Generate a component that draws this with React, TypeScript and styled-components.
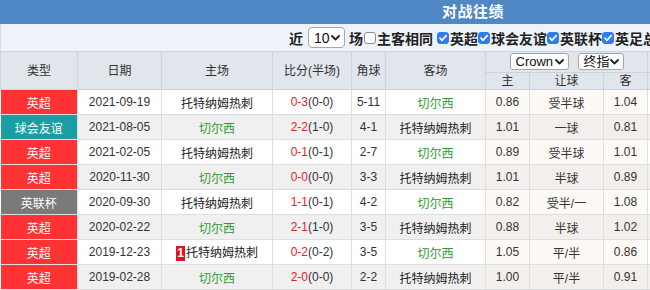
import styled, { createGlobalStyle } from 'styled-components';

interface Match {
    type: '英超' | '球会友谊' | '英联杯';
    date: string;
    home: string;
    score: string;
    half: string;
    corner: string;
    away: string;
    oddsHome: string;
    handicap: string;
    oddsAway: string;
    redCard?: number;
}

const CHELSEA = '切尔西';

const matches: Match[] = [
    { type: '英超', date: '2021-09-19', home: '托特纳姆热刺', score: '0-3', half: '(0-0)', corner: '5-11', away: '切尔西', oddsHome: '0.86', handicap: '受半球', oddsAway: '1.04' },
    { type: '球会友谊', date: '2021-08-05', home: '切尔西', score: '2-2', half: '(1-0)', corner: '4-1', away: '托特纳姆热刺', oddsHome: '1.01', handicap: '一球', oddsAway: '0.81' },
    { type: '英超', date: '2021-02-05', home: '托特纳姆热刺', score: '0-1', half: '(0-1)', corner: '2-7', away: '切尔西', oddsHome: '0.89', handicap: '受半球', oddsAway: '1.01' },
    { type: '英超', date: '2020-11-30', home: '切尔西', score: '0-0', half: '(0-0)', corner: '3-3', away: '托特纳姆热刺', oddsHome: '1.01', handicap: '半球', oddsAway: '0.89' },
    { type: '英联杯', date: '2020-09-30', home: '托特纳姆热刺', score: '1-1', half: '(0-1)', corner: '4-2', away: '切尔西', oddsHome: '0.82', handicap: '受半/一', oddsAway: '1.08' },
    { type: '英超', date: '2020-02-22', home: '切尔西', score: '2-1', half: '(1-0)', corner: '3-5', away: '托特纳姆热刺', oddsHome: '0.88', handicap: '半球', oddsAway: '1.02' },
    { type: '英超', date: '2019-12-23', home: '托特纳姆热刺', score: '0-2', half: '(0-2)', corner: '3-5', away: '切尔西', oddsHome: '1.05', handicap: '平/半', oddsAway: '0.86', redCard: 1 },
    { type: '英超', date: '2019-02-28', home: '切尔西', score: '2-0', half: '(0-0)', corner: '2-2', away: '托特纳姆热刺', oddsHome: '1.00', handicap: '平/半', oddsAway: '0.91' },
    { type: '英超', date: '2018-11-24', home: '托特纳姆热刺', score: '3-1', half: '(2-0)', corner: '4-4', away: '切尔西', oddsHome: '0.95', handicap: '平/半', oddsAway: '0.95' },
];

const typeColors: Record<Match['type'], string> = {
    '英超': '#ff3333',
    '球会友谊': '#1a9ea3',
    '英联杯': '#7a7a7a',
};

const leagues = ['英超', '球会友谊', '英联杯', '英足总杯'];

const Chevron = () => (
    <svg width="9" height="6" viewBox="0 0 9 6">
        <path d="M1 1l3.5 3.5L8 1" fill="none" stroke="#222" strokeWidth="1.8" strokeLinecap="round" strokeLinejoin="round" />
    </svg>
);

const Check = () => (
    <svg width="10" height="10" viewBox="0 0 10 10">
        <path d="M2 5.2l2 2.1L8.2 2.6" fill="none" stroke="#fff" strokeWidth="1.7" strokeLinecap="round" strokeLinejoin="round" />
    </svg>
);

export default function App() {
    return (
        <Page>
            <GlobalStyle />
            <Board>
                <Title>对战往绩</Title>
                <FilterBar>
                    <Word $after={5}>近</Word>
                    <FakeSelect $w={37} $h={21}>10<Chevron /></FakeSelect>
                    <Word $before={4} $after={1}>场</Word>
                    <Label $after={4}>
                        <CheckBox $checked={false} />主客相同
                    </Label>
                    {leagues.map(l => (
                        <Label key={l}>
                            <CheckBox $checked><Check /></CheckBox>{l}
                        </Label>
                    ))}
                </FilterBar>
                <Table>
                    <colgroup>
                        {[77, 84, 111, 79, 34, 100, 44, 74, 44, 44, 74, 44, 45, 46, 46].map((w, i) => (
                            <col key={i} style={{ width: w }} />
                        ))}
                    </colgroup>
                    <thead>
                        <tr>
                            <Th rowSpan={2}>类型</Th>
                            <Th rowSpan={2}>日期</Th>
                            <Th rowSpan={2}>主场</Th>
                            <Th rowSpan={2}>比分(半场)</Th>
                            <Th rowSpan={2}>角球</Th>
                            <Th rowSpan={2}>客场</Th>
                            <Th colSpan={3} $short>
                                <SelectGroup>
                                    <FakeSelect $w={59} $h={17} $thin>Crown<Chevron /></FakeSelect>
                                    <FakeSelect $w={46} $h={17} $thin>终指<Chevron /></FakeSelect>
                                </SelectGroup>
                            </Th>
                            <Th colSpan={3} $short>大小球</Th>
                            <Th colSpan={3} $short>结果</Th>
                        </tr>
                        <tr>
                            {['主', '让球', '客', '大', '盘口', '小', '胜负', '盘路', '大小'].map(h => (
                                <Th key={h} $sub>{h}</Th>
                            ))}
                        </tr>
                    </thead>
                    <tbody>
                        {matches.map((m, i) => {
                            const alt = i % 2 === 1;
                            return (
                                <tr key={m.date}>
                                    <TypeCell $color={typeColors[m.type]}>{m.type}</TypeCell>
                                    <Td $alt={alt}>{m.date}</Td>
                                    <Td $alt={alt}>
                                        {m.redCard ? <RedCard>{m.redCard}</RedCard> : null}
                                        <Team $chelsea={m.home === CHELSEA}>{m.home}</Team>
                                    </Td>
                                    <Td $alt={alt}>
                                        <Score>{m.score}</Score>{m.half}
                                    </Td>
                                    <Td $alt={alt}>{m.corner}</Td>
                                    <Td $alt={alt}>
                                        <Team $chelsea={m.away === CHELSEA}>{m.away}</Team>
                                    </Td>
                                    <Td $alt={alt} $odds>{m.oddsHome}</Td>
                                    <Td $alt={alt} $odds>{m.handicap}</Td>
                                    <Td $alt={alt} $odds>{m.oddsAway}</Td>
                                    <Td $alt={alt}>0.90</Td>
                                    <Td $alt={alt}>2.5</Td>
                                    <Td $alt={alt}>0.96</Td>
                                    <Td $alt={alt}>负</Td>
                                    <Td $alt={alt}>输</Td>
                                    <Td $alt={alt}>大</Td>
                                </tr>
                            );
                        })}
                    </tbody>
                </Table>
            </Board>
        </Page>
    );
}

const GlobalStyle = createGlobalStyle`
    html, body {
        margin: 0;
        padding: 0;
        background: #fff;
        overflow: hidden;
    }
    body {
        font-family: "Liberation Sans", "Noto Sans CJK SC", sans-serif;
        font-size: 12px;
        color: #333;
    }
`;

const Page = styled.div`
    width: 650px;
    height: 290px;
    overflow: hidden;
`;

const Board = styled.div`
    width: 946px;
`;

const Title = styled.div`
    height: 24px;
    line-height: 24px;
    background: #4f88c5;
    color: #fff;
    font-size: 15px;
    font-weight: bold;
    text-align: center;
    letter-spacing: 0.5px;
`;

const FilterBar = styled.div`
    height: 27px;
    box-sizing: border-box;
    display: flex;
    align-items: center;
    padding-left: 288px;
    background: #eef3f9;
    border-left: 1px solid #d3dbe5;
    font-size: 14px;
    font-weight: bold;
    color: #222;
    white-space: nowrap;
`;

const Word = styled.span<{ $before?: number; $after?: number }>`
    margin-left: ${p => p.$before ?? 0}px;
    margin-right: ${p => p.$after ?? 0}px;
`;

const Label = styled.label<{ $after?: number }>`
    display: inline-flex;
    align-items: center;
    gap: 1px;
    margin-right: ${p => p.$after ?? 0}px;
`;

const CheckBox = styled.span<{ $checked: boolean }>`
    display: inline-flex;
    align-items: center;
    justify-content: center;
    width: 12px;
    height: 12px;
    box-sizing: border-box;
    border-radius: 3px;
    background: ${p => (p.$checked ? '#2f7cf0' : '#fff')};
    border: 1px solid ${p => (p.$checked ? '#2f7cf0' : '#8e8e8e')};
`;

const FakeSelect = styled.span<{ $w: number; $h: number; $thin?: boolean }>`
    display: inline-flex;
    align-items: center;
    justify-content: space-between;
    box-sizing: border-box;
    width: ${p => p.$w}px;
    height: ${p => p.$h}px;
    padding: 0 4px 0 5px;
    background: #fff;
    border: 1px solid #a6a6a6;
    border-radius: ${p => (p.$thin ? '3px' : '4px')};
    font-size: ${p => (p.$thin ? '13px' : '14px')};
    font-weight: normal;
    color: #111;
`;

const Table = styled.table`
    width: 946px;
    table-layout: fixed;
    border-collapse: collapse;
`;

const Th = styled.th<{ $short?: boolean; $sub?: boolean }>`
    height: ${p => (p.$sub ? '16px' : p.$short ? '20px' : 'auto')};
    padding: 0;
    background: #e1e6ed;
    border: 1px solid #cbd3dc;
    font-weight: normal;
    font-size: 12px;
    color: #333;
    text-align: center;
    line-height: 14px;
`;

const SelectGroup = styled.div`
    display: flex;
    justify-content: center;
    gap: 9px;
    margin-top: -1px;
`;

const Td = styled.td<{ $alt: boolean; $odds?: boolean }>`
    height: 24px;
    padding: 0;
    text-align: center;
    white-space: nowrap;
    border: 1px solid #dedede;
    color: #333;
    background: ${p =>
        p.$odds ? (p.$alt ? '#f2efec' : '#fdf9f6') : p.$alt ? '#f0f0f0' : '#ffffff'};
`;

const TypeCell = styled.td<{ $color: string }>`
    height: 24px;
    padding: 0;
    text-align: center;
    color: #fff;
    background: ${p => p.$color};
    border: 1px solid #dedede;
    border-left: none;
`;

const Team = styled.span<{ $chelsea: boolean }>`
    color: ${p => (p.$chelsea ? '#2f9a2f' : '#222')};
`;

const Score = styled.span`
    color: #e8202a;
`;

const RedCard = styled.span`
    display: inline-block;
    width: 9px;
    height: 15px;
    line-height: 15px;
    margin-right: 1px;
    background: #e8101c;
    color: #fff;
    font-weight: bold;
    font-size: 12px;
    vertical-align: middle;
    text-align: center;
`;
